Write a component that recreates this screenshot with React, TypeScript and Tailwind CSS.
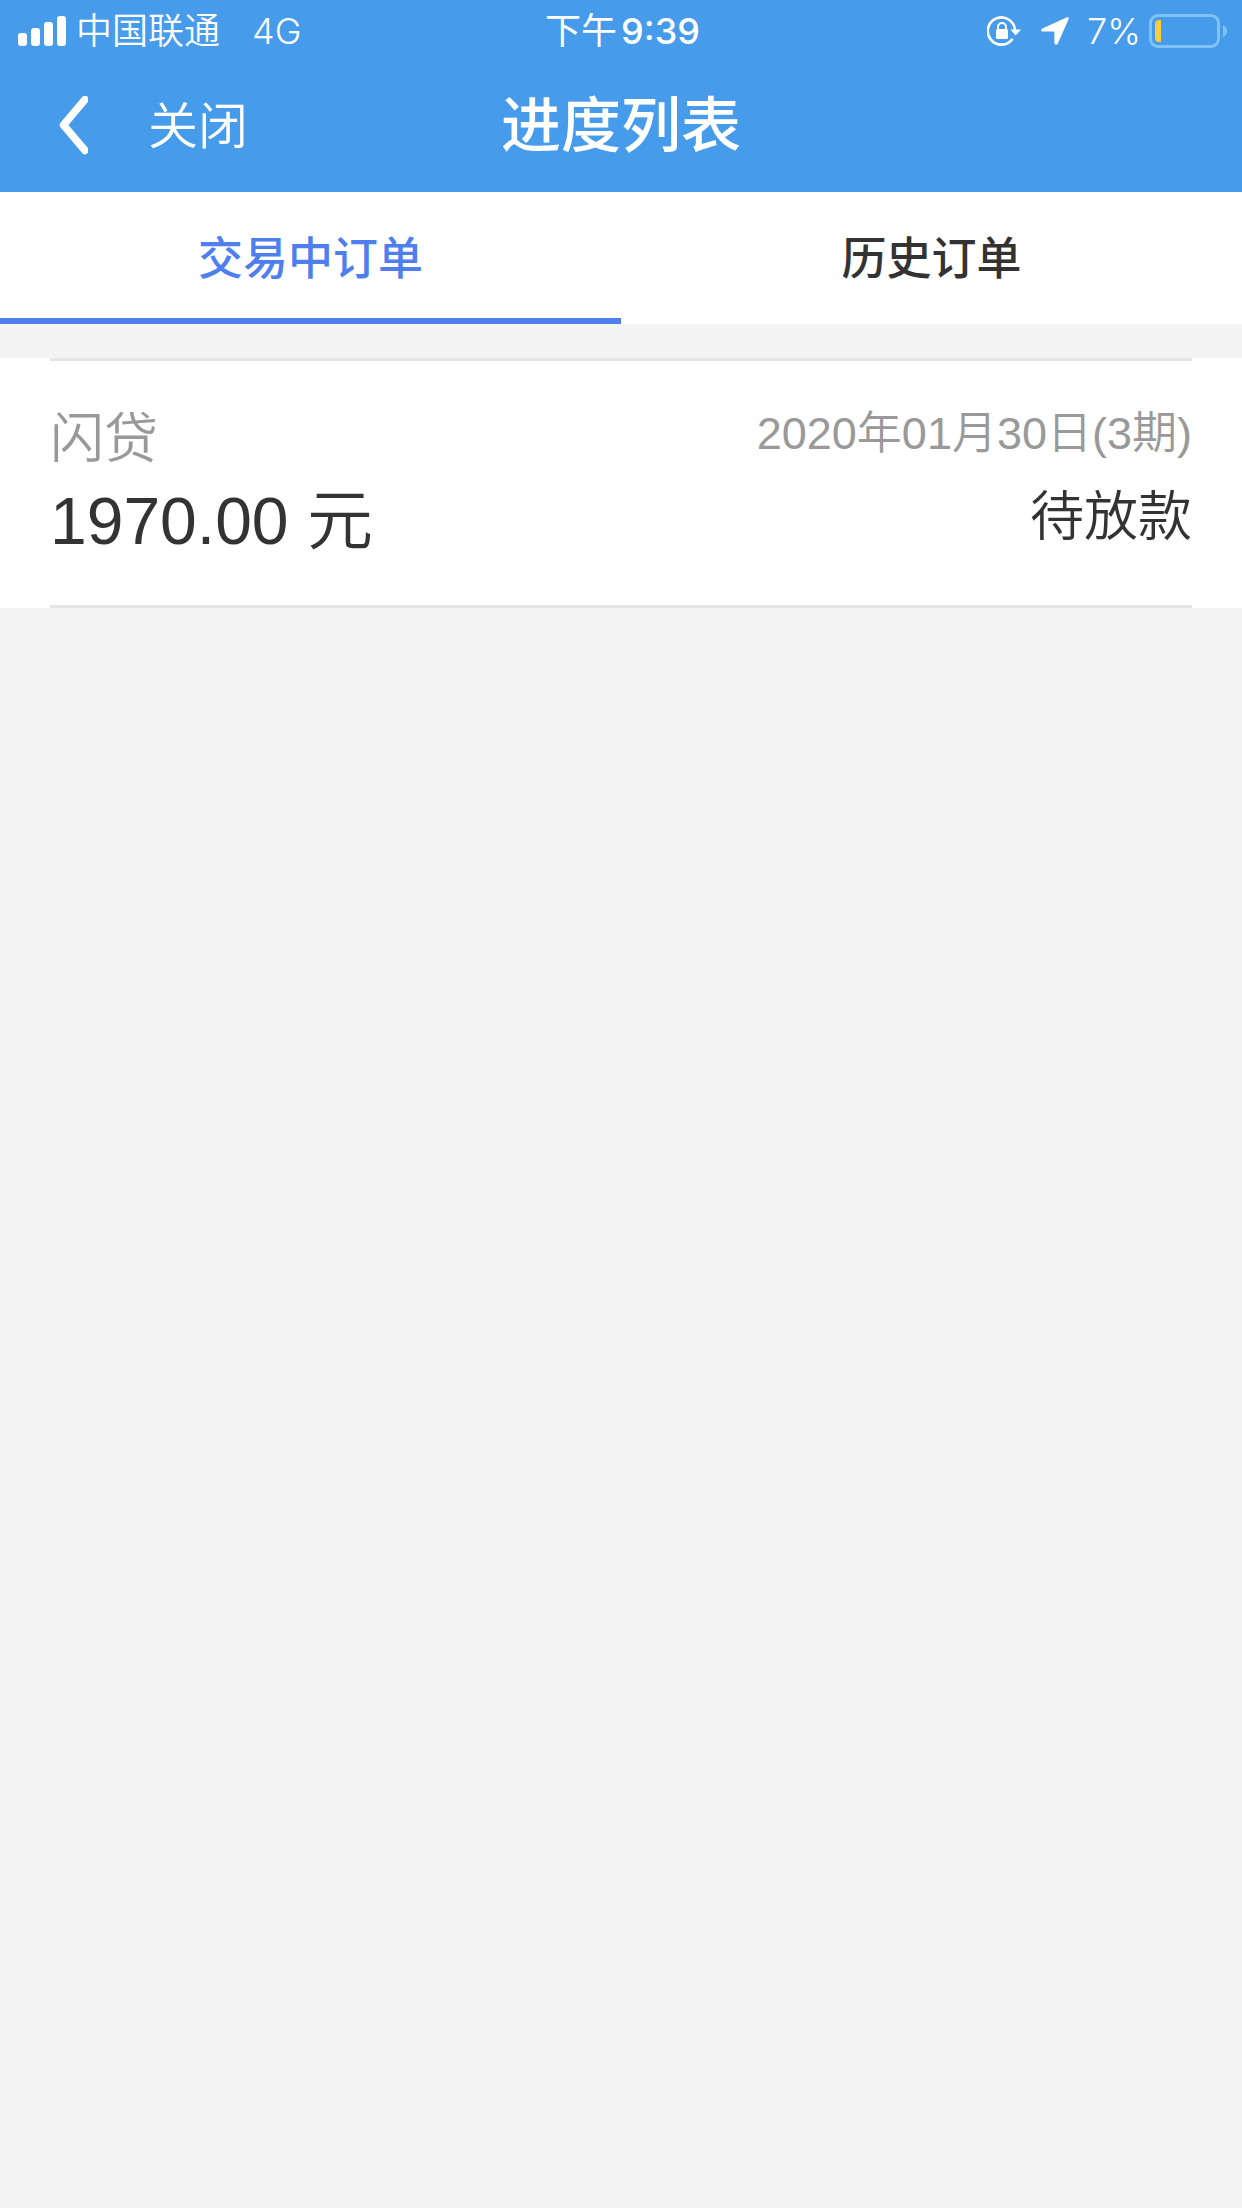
import React, { useState } from 'react';

type OrderTab = 'active' | 'history';

interface Order {
  id: number;
  product: string;
  amount: string;
  date: string;
  periods: number;
  status: string;
}

const TABS: { key: OrderTab; label: string }[] = [
  { key: 'active', label: '交易中订单' },
  { key: 'history', label: '历史订单' }
];

const ORDERS: Record<OrderTab, Order[]> = {
  active: [
    { id: 1, product: '闪贷', amount: '1970.00', date: '2020年01月30日', periods: 3, status: '待放款' }
  ],
  history: []
};

const SignalIcon = () => (
  <svg width="48" height="30" viewBox="0 0 48 30" fill="currentColor" aria-hidden="true">
    <rect x="0" y="17" width="9" height="13" rx="3" />
    <rect x="13" y="12" width="9" height="18" rx="3" />
    <rect x="26" y="6" width="9" height="24" rx="3" />
    <rect x="39" y="0" width="9" height="30" rx="3" />
  </svg>
);

const RotationLockIcon = () => (
  <svg width="34" height="30" viewBox="0 0 34 30" fill="none" aria-hidden="true">
    <path d="M28 14.5A13.6 13.6 0 1 0 25.6 22.8" stroke="currentColor" strokeWidth="2.6" />
    <path d="M23.3 13.6H34L28.6 19.6Z" fill="currentColor" />
    <rect x="9" y="13" width="12" height="10" rx="1.5" fill="currentColor" />
    <path d="M11 14V11a4 4 0 0 1 8 0V14" stroke="currentColor" strokeWidth="2" />
  </svg>
);

const LocationIcon = () => (
  <svg width="28" height="28" viewBox="0 0 28 28" fill="currentColor" aria-hidden="true">
    <path d="M26 0.3L1.2 11.4C-0.5 12.2-0.2 14.6 1.7 14.6H12.2Q13.4 14.6 13.4 15.8V26.1C13.4 28 15.9 28.4 16.7 26.8L27.6 2.2C28.2 0.8 27.2-0.2 26 0.3Z" />
  </svg>
);

const BatteryIcon = () => (
  <svg width="78" height="34" viewBox="0 0 78 34" fill="none" aria-hidden="true">
    <rect x="1.5" y="1.5" width="68" height="31" rx="7.5" stroke="#80c2f2" strokeWidth="3" />
    <path d="M74 11Q78 13 78 17T74 23Z" fill="#80c2f2" />
    <path d="M12 6V28H10Q6 28 6 24V10Q6 6 10 6Z" fill="#fccc3a" />
  </svg>
);

const StatusBar = () => (
  <div className="grid grid-cols-[1fr_auto_1fr] items-center h-[62px] pl-[18px] pr-[15px] text-4xl leading-[62px] font-[350] font-[Inter,'Noto_Sans_CJK_SC',sans-serif]">
    <div className="flex items-center">
      <SignalIcon />
      <span className="ml-2.5">中国联通</span>
      <span className="ml-8">4G</span>
    </div>
    <div className="flex gap-1">
      <span className="font-normal">下午</span>
      <span className="font-medium">9:39</span>
    </div>
    <div className="flex items-center justify-end">
      <RotationLockIcon />
      <span className="ml-5"><LocationIcon /></span>
      <span className="ml-[18px]">7%</span>
      <span className="ml-2"><BatteryIcon /></span>
    </div>
  </div>
);

const NavBar = () => (
  <div className="grid grid-cols-[1fr_auto_1fr] items-center h-[130px] px-[58px]">
    <div className="flex items-center gap-[60px]">
      <button aria-label="返回">
        <svg width="30" height="62" viewBox="0 0 30 62" fill="none" aria-hidden="true">
          <path d="M27 3.5L5.5 29L27 54.5" stroke="currentColor" strokeWidth="7.5" strokeLinecap="round" strokeLinejoin="round" />
        </svg>
      </button>
      <button className="text-[50px] leading-[60px] font-[350]">关闭</button>
    </div>
    <h1 className="text-[60px] leading-[72px] font-medium">进度列表</h1>
  </div>
);

const OrderCard: React.FC<{ order: Order }> = ({ order }) => (
  <li className="bg-white px-[50px]">
    <div className="flex justify-between border-y-3 border-[#e5e5e5] pt-[38px] pb-[42px] font-[350]">
      <div>
        <div className="text-[54px] leading-[80px] text-[#999]">{order.product}</div>
        <div className="text-[66px] leading-[84px] text-[#333]">{order.amount} 元</div>
      </div>
      <div className="text-right">
        <div className="text-[45px] leading-[70px] text-[#999]">{order.date}({order.periods}期)</div>
        <div className="mt-2 text-[54px] leading-[80px] text-[#333]">{order.status}</div>
      </div>
    </div>
  </li>
);

const App = () => {
  const [tab, setTab] = useState<OrderTab>('active');

  return (
    <div className="min-h-screen bg-[#f4f4f4] font-['Liberation_Sans','Noto_Sans_CJK_SC',sans-serif]">
      <header className="bg-[#469bea] text-white">
        <StatusBar />
        <NavBar />
      </header>

      <nav className="flex bg-white">
        {TABS.map(({ key, label }) => (
          <button
            key={key}
            onClick={() => setTab(key)}
            className={`flex-1 h-[132px] pt-2.5 border-b-6 text-[45px] font-medium ${
              tab === key ? 'border-[#4f7fee] text-[#4f7fee]' : 'border-transparent text-[#333]'
            }`}
          >
            {label}
          </button>
        ))}
      </nav>

      <ul className="mt-[34px]">
        {ORDERS[tab].map(order => (
          <OrderCard key={order.id} order={order} />
        ))}
      </ul>
    </div>
  );
};

export default App;
